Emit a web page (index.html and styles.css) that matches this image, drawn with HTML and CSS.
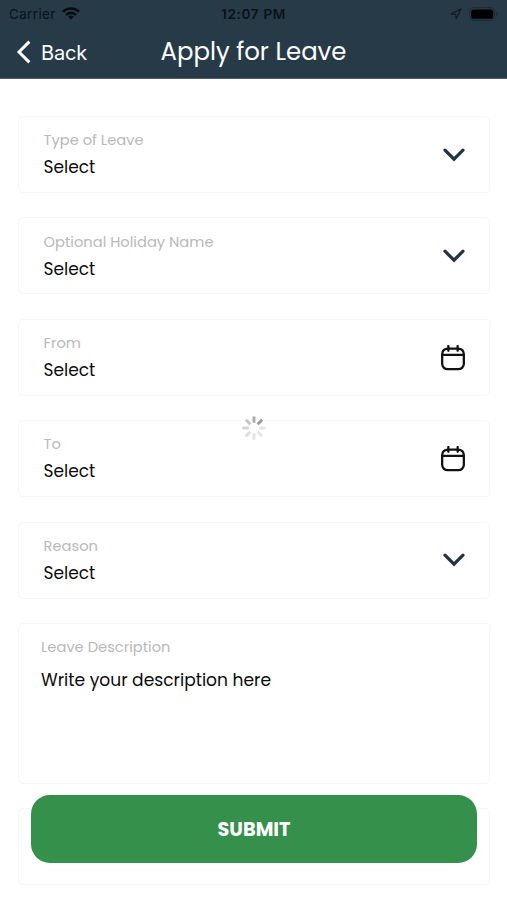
FILE: index.html
```
<!DOCTYPE html>
<html lang="en">
<head>
<meta charset="utf-8">
<title>Apply for Leave</title>
<link rel="stylesheet" href="styles.css">
</head>
<body>
<svg class="defs" width="0" height="0">
  <symbol id="chevron" viewBox="0 0 22 14"><path d="M2 2.2 11 11.2 20 2.2" fill="none" stroke="#203442" stroke-width="3.2" stroke-linecap="round"/></symbol>
  <symbol id="calendar" viewBox="0 0 24 24"><path d="M7 3.3h10a5 5 0 0 1 5 5v9a5 5 0 0 1-5 5H7a5 5 0 0 1-5-5v-9a5 5 0 0 1 5-5ZM2 9.2h20M7.7 1v4.4M16.3 1v4.4" fill="none" stroke="#111" stroke-width="2.1" stroke-linecap="round"/></symbol>
</svg>
<header class="header">
  <div class="status">
    <span class="carrier">Carrier</span>
    <svg class="wifi" viewBox="0 0 18 13"><g fill="none" stroke="#070c10" stroke-width="2.5"><path d="M1 4.7a11.3 11.3 0 0 1 16 0"/><path d="M4 8a7 7 0 0 1 10 0"/></g><path d="M9 12.6 6.2 9.8a4 4 0 0 1 5.6 0Z" fill="#070c10"/></svg>
    <span class="time">12:07 PM</span>
    <svg class="location" viewBox="0 0 12 12"><path d="M1 6 11 1 6.2 11 5.7 6.3Z" fill="none" stroke="#101a22" stroke-width="1.2" stroke-linejoin="round"/></svg>
    <svg class="battery" viewBox="0 0 30 14"><rect x=".6" y=".6" width="25" height="12.8" rx="4" fill="none" stroke="#1b2932"/><rect x="2.2" y="2.4" width="22" height="9.4" rx="2.6" fill="#000"/><path d="M27.4 5v4q1.5-.5 1.5-2t-1.5-2" fill="#1b2932"/></svg>
  </div>
  <div class="nav">
    <svg class="back-icon" viewBox="0 0 16 26"><path d="M13.4 2.6 3 13l10.4 10.4" fill="none" stroke="#fff" stroke-width="3"/></svg>
    <span class="back">Back</span>
    <h1 class="title">Apply for Leave</h1>
  </div>
</header>
<main class="form">
  <div class="card"><div><div class="label">Type of Leave</div><div class="value">Select</div></div><svg class="chevron"><use href="#chevron"/></svg></div>
  <div class="card"><div><div class="label">Optional Holiday Name</div><div class="value">Select</div></div><svg class="chevron"><use href="#chevron"/></svg></div>
  <div class="card"><div><div class="label">From</div><div class="value">Select</div></div><svg class="calendar"><use href="#calendar"/></svg></div>
  <div class="card"><div><div class="label">To</div><div class="value">Select</div></div><svg class="calendar"><use href="#calendar"/></svg></div>
  <div class="card"><div><div class="label">Reason</div><div class="value">Select</div></div><svg class="chevron"><use href="#chevron"/></svg></div>
  <div class="card description"><div><div class="label">Leave Description</div><div class="value placeholder">Write your description here</div></div></div>
  <div class="card"></div>
</main>
<button class="submit">SUBMIT</button>
<svg class="spinner" viewBox="-12 -12 24 24"><g stroke-width="2.8">
  <path d="M0-5.2V-11.6" stroke="#aaa"/>
  <path d="M0-5.2V-11.6" stroke="#999" transform="rotate(45)"/>
  <path d="M0-5.2V-11.6" stroke="#e6e6e6" transform="rotate(90)"/>
  <path d="M0-5.2V-11.6" stroke="#e6e6e6" transform="rotate(135)"/>
  <path d="M0-5.2V-11.6" stroke="#e2e2e2" transform="rotate(180)"/>
  <path d="M0-5.2V-11.6" stroke="#dcdcdc" transform="rotate(225)"/>
  <path d="M0-5.2V-11.6" stroke="#d2d2d2" transform="rotate(270)"/>
  <path d="M0-5.2V-11.6" stroke="#c4c4c4" transform="rotate(315)"/>
</g></svg>
</body>
</html>
```
FILE: styles.css
```
* { box-sizing: border-box; }
body { margin: 0; height: 900px; position: relative; overflow: hidden; background: #fff; color: #0c0c0c; font-family: Poppins, Inter, sans-serif; }
svg { display: block; flex: none; }
.defs { position: absolute; }
.header { height: 79px; background: #273a48; border-bottom: 1px solid #4b6170; }
.status { height: 27px; display: flex; align-items: center; padding: 0 8px 0 9px; font-family: Inter, sans-serif; color: #0b1218; font-size: 13px; position: relative; }
.carrier { font-size: 13.4px; letter-spacing: .4px; width: 53px; white-space: nowrap; }
.wifi { width: 18px; height: 13px; }
.time { position: absolute; left: 0; right: 0; text-align: center; font-size: 13.6px; font-weight: 600; letter-spacing: .65px; }
.location { width: 12px; height: 12px; margin-left: auto; }
.battery { width: 30px; height: 14px; margin-left: 7px; }
.nav { height: 50px; display: flex; align-items: center; padding-left: 16px; position: relative; color: #fff; }
.back-icon { width: 16px; height: 26px; }
.back { font-family: Inter, sans-serif; font-size: 20px; line-height: 24px; margin: 1px 0 0 9px; letter-spacing: -.2px; }
.title { position: absolute; left: 0; right: 0; margin: 0; text-align: center; font-size: 24.4px; font-weight: 400; line-height: 48px; }
.form { padding: 37px 17px 0 18px; display: flex; flex-direction: column; gap: 24.4px; }
.card { height: 77px; border: 1.5px solid #f6f6f6; border-radius: 5px; padding: 12.2px 24px 0 24.5px; display: flex; justify-content: space-between; }
.label { font-size: 14.7px; line-height: 23px; color: #b9b9b9; }
.value { font-size: 17px; line-height: 30.4px; }
.chevron { width: 22px; height: 14px; margin-top: 18.4px; }
.calendar { width: 26px; height: 26px; margin: 13px -.6px 0 0; }
.description { height: 161px; padding-left: 22px; }
.placeholder { margin-top: 4px; line-height: 35px; font-size: 17.1px; }
.submit { position: absolute; left: 31px; top: 795px; width: 446px; height: 68px; border: 0; border-radius: 19px; background: #35904c; color: #fff; font: inherit; font-size: 19.3px; font-weight: 700; }
.spinner { position: absolute; left: 242px; top: 416px; width: 24px; height: 24px; }
```
